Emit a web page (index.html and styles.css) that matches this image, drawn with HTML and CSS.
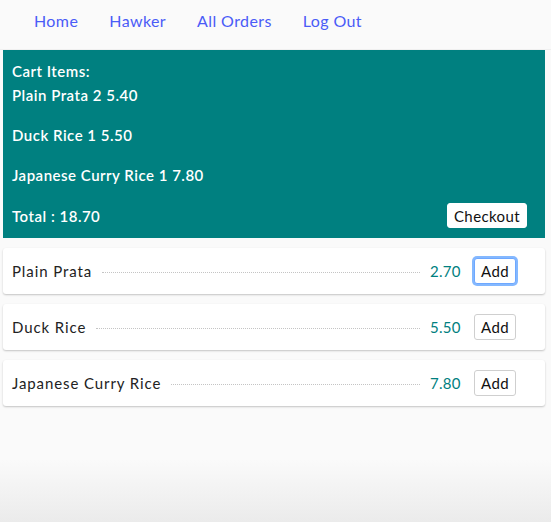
FILE: index.html
```html
<!DOCTYPE html>
<html>
<head>
<meta charset="utf-8">
<link rel="stylesheet" href="styles.css">
</head>
<body>
<nav class="nav">
  <a href="#">Home</a>
  <a href="#">Hawker</a>
  <a href="#">All Orders</a>
  <a href="#">Log Out</a>
</nav>
<main class="page">
  <section class="cart">
    <div class="cart-title">Cart Items:</div>
    <p class="cart-line">Plain Prata 2 5.40</p>
    <p class="cart-line">Duck Rice 1 5.50</p>
    <p class="cart-line">Japanese Curry Rice 1 7.80</p>
    <div class="cart-foot">
      <span>Total : 18.70</span>
      <button class="btn">Checkout</button>
    </div>
  </section>
  <div class="item">
    <span class="name">Plain Prata</span>
    <span class="dots"></span>
    <span class="price">2.70</span>
    <button class="btn add focus">Add</button>
  </div>
  <div class="item">
    <span class="name">Duck Rice</span>
    <span class="dots"></span>
    <span class="price">5.50</span>
    <button class="btn add">Add</button>
  </div>
  <div class="item">
    <span class="name">Japanese Curry Rice</span>
    <span class="dots"></span>
    <span class="price">7.80</span>
    <button class="btn add">Add</button>
  </div>
</main>
</body>
</html>
```

FILE: styles.css
```css
html {
  min-height: 100%;
  background: linear-gradient(to bottom, #fafafa 0, #fafafa 460px, #ebebeb 522px);
}
body {
  margin: 0;
  font-family: Lato, "Open Sans", sans-serif;
  color: #222;
}
.nav {
  height: 49px;
  border-bottom: 1px solid #f0f0f0;
  display: flex;
  align-items: center;
  padding-left: 18px;
  box-sizing: content-box;
}
.nav a {
  color: #4a5cf7;
  text-decoration: none;
  font-size: 16px;
  letter-spacing: 0.4px;
  padding: 0 15px 0 16px;
  margin-top: -8px;
}
.page {
  padding: 0 6px 0 3px;
}
.cart {
  background: #008080;
  color: #fff;
  padding: 10px 18px 10px 9px;
  font-size: 15px;
  font-weight: 600;
  letter-spacing: 0.5px;
  margin-bottom: 10px;
}
.cart-title {
  line-height: 20px;
  margin: 1px 0 2px;
}
.cart-line {
  margin: 0 0 16px;
  line-height: 24px;
}
.cart-foot {
  display: flex;
  align-items: center;
  justify-content: space-between;
}
.btn {
  font-family: Lato, "Open Sans", sans-serif;
  font-size: 15px;
  color: #111;
  background: #fff;
  border: 1px solid #cfcfcf;
  border-radius: 3px;
  padding: 0 4px;
  height: 26px;
  font-weight: 400;
  letter-spacing: 0.4px;
}
.cart .btn {
  border-color: #fff;
  width: 80px;
  height: 25px;
}
.item {
  background: #fff;
  height: 46px;
  border-radius: 3px;
  box-shadow: 0 1px 2px rgba(0, 0, 0, 0.22);
  display: flex;
  align-items: center;
  padding: 0 29px 0 9px;
  margin-bottom: 10px;
  font-size: 15px;
}
.name {
  letter-spacing: 0.9px;
}
.dots {
  flex: 1;
  border-bottom: 1px dotted #c4c4c4;
  margin: 2px 10px 0 10px;
}
.price {
  color: #008080;
  width: 28px;
  text-align: right;
  margin-right: 16px;
  letter-spacing: 0.3px;
}
.add {
  width: 42px;
  padding: 0;
}
.focus {
  box-shadow: 0 0 0 2px #84b8ff;
  border-color: #6ea8ff;
}
```
